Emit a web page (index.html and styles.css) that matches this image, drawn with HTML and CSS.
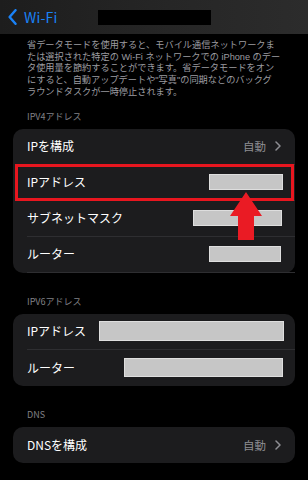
FILE: index.html
```html
<!DOCTYPE html>
<html lang="ja">
<head>
<meta charset="utf-8">
<link rel="stylesheet" href="styles.css">
</head>
<body>
<div class="screen">
  <header class="nav">
    <div class="back">
      <svg class="back-icon" width="9" height="16" viewBox="0 0 9 16"><path d="M7.5 1.2 L1.6 8 L7.5 14.8" fill="none" stroke="#1a82f7" stroke-width="2.4" stroke-linecap="round" stroke-linejoin="round"/></svg>
      <span class="back-label">Wi-Fi</span>
    </div>
    <div class="title-mask"></div>
    <div></div>
  </header>

  <p class="desc">省データモードを使用すると、モバイル通信ネットワークま<br>たは選択された特定の Wi-Fi ネットワークでの iPhone のデー<br>タ使用量を節約することができます。省データモードをオン<br>にすると、自動アップデートや"写真"の同期などのバックグ<br>ラウンドタスクが一時停止されます。</p>

  <section class="group first">
    <h2 class="group-label">IPV4アドレス</h2>
    <div class="card">
      <div class="row"><span class="label">IPを構成</span><span class="value">自動<svg class="chev" width="6" height="10" viewBox="0 0 6 10"><path d="M1 1 L5 5 L1 9" fill="none" stroke="#8e8e93" stroke-width="1.5" stroke-linecap="round" stroke-linejoin="round"/></svg></span></div>
      <div class="row"><span class="label">IPアドレス</span><span class="mask m-ip4"></span></div>
      <div class="row"><span class="label">サブネットマスク</span><span class="mask m-sub"></span></div>
      <div class="row"><span class="label">ルーター</span><span class="mask m-rt4"></span></div>
      <div class="highlight"></div>
      <svg class="arrow" width="32" height="48" viewBox="0 0 32 48"><polygon points="16,0 32,24 24,24 24,48 8,48 8,24 0,24" fill="#ea1b24"/></svg>
    </div>
  </section>

  <section class="group">
    <h2 class="group-label">IPV6アドレス</h2>
    <div class="card">
      <div class="row"><span class="label">IPアドレス</span><span class="mask m-ip6"></span></div>
      <div class="row"><span class="label">ルーター</span><span class="mask m-rt6"></span></div>
    </div>
  </section>

  <section class="group">
    <h2 class="group-label">DNS</h2>
    <div class="card">
      <div class="row"><span class="label">DNSを構成</span><span class="value">自動<svg class="chev" width="6" height="10" viewBox="0 0 6 10"><path d="M1 1 L5 5 L1 9" fill="none" stroke="#8e8e93" stroke-width="1.5" stroke-linecap="round" stroke-linejoin="round"/></svg></span></div>
    </div>
  </section>
</div>
</body>
</html>
```

FILE: styles.css
```css
* { box-sizing: border-box; }
html, body {
  margin: 0;
  padding: 0;
  background: #000;
}
body {
  font-family: "Noto Sans CJK JP", "Noto Sans", sans-serif;
  color: #fff;
  width: 308px;
  height: 480px;
  overflow: hidden;
}
.screen {
  display: flex;
  flex-direction: column;
}
.nav {
  height: 34px;
  display: grid;
  grid-template-columns: 1fr auto 1fr;
  align-items: center;
  background: linear-gradient(90deg, #1d1d1d 0%, #262626 55%, #2c2c2c 100%);
}
.back {
  display: flex;
  align-items: center;
  padding-left: 8px;
  gap: 7px;
}
.back-icon { display: block; }
.back-label {
  font-size: 14px;
  line-height: 16px;
  color: #1a82f7;
  letter-spacing: 0.2px;
}
.title-mask {
  width: 113px;
  height: 15px;
  background: #000;
  margin-top: 1px;
}
.desc {
  margin: 0;
  padding: 6px 0 0 27px;
  font-family: "Liberation Sans", "Noto Sans CJK JP", sans-serif;
  font-size: 9.2px;
  line-height: 11.7px;
  color: #9c9ca1;
  white-space: nowrap;
}
.group {
  margin-top: 23px;
  padding: 0 13px;
}
.group.first { margin-top: 12px; }
.group-label {
  margin: 0 0 6px 14px;
  font-size: 9px;
  line-height: 12px;
  font-weight: normal;
  color: #818186;
}
.card {
  position: relative;
  background: #1c1c1e;
  border-radius: 10px;
}
.row {
  height: 36px;
  margin-left: 14px;
  padding-right: 14px;
  display: flex;
  align-items: center;
  justify-content: space-between;
  border-bottom: 1px solid #2e2e31;
}
.row:nth-last-of-type(1) { border-bottom: none; }
.label {
  font-size: 12px;
  line-height: 16px;
}
.value {
  display: flex;
  align-items: center;
  gap: 9px;
  font-size: 11.5px;
  color: #8e8e93;
}
.chev { display: block; }
.mask {
  display: block;
  background: #c6c6c6;
  border: 1px solid #dedede;
  margin-right: -2px;
}
.m-ip4 { width: 74px; height: 16px; }
.m-sub { width: 89px; height: 16px; margin-right: -1px; }
.m-rt4 { width: 72px; height: 16px; margin-right: 0; }
.m-ip6 { width: 185px; height: 20px; margin-right: -3px; }
.m-rt6 { width: 159px; height: 19px; }
.highlight {
  position: absolute;
  left: 2px;
  right: 1px;
  top: 35px;
  height: 37px;
  border: 3px solid #e8161f;
}
.arrow {
  position: absolute;
  left: 217px;
  top: 63px;
}
```
